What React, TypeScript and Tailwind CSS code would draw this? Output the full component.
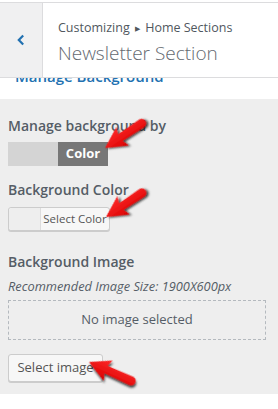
import React from "react";

const font = { fontFamily: '"Open Sans", "Noto Sans", Arial, sans-serif' };

function Arrow({ x, y, angle, len }: { x: number; y: number; angle: number; len: number }) {
  const d = `M0 0 L21 -11 L18.5 -4 L${len} -4.6 A4.6 4.6 0 0 1 ${len} 4.6 L18.5 4 L21 11 Z`;
  return (
    <path
      d={d}
      transform={`translate(${x} ${y}) rotate(${angle})`}
      fill="url(#red)"
      filter="url(#shadow)"
    />
  );
}

export default function App() {
  return (
    <div className="relative w-[278px] h-[409px] bg-white overflow-hidden" style={font}>
      {/* header */}
      <div className="relative z-10 mt-[2px] flex h-[76px] border-y border-[#dcdcde] bg-white">
        <div className="flex w-[43px] items-center justify-center border-r border-[#dcdcde] bg-[#f0f0f1]">
          <svg width="10" height="14" viewBox="0 0 10 14">
            <path d="M7.2 2.5 L2.8 7 L7.2 11.5" fill="none" stroke="#2271b1" strokeWidth="2.2" />
          </svg>
        </div>
        <div className="flex flex-col pl-[15px] pt-[16px]">
          <div className="text-[12.5px] leading-[18px] text-[#50575e]">
            Customizing <span className="text-[7px] align-[1px] px-[2px]">▶</span> Home Sections
          </div>
          <div className="mt-[3px] text-[19px] leading-[24px] font-light text-[#646970]">
            Newsletter Section
          </div>
        </div>
      </div>

      {/* clipped section link */}
      <div className="relative h-[21px] overflow-hidden">
        <div className="-mt-[12px] pl-[15px] text-[15px] leading-[20px] font-semibold text-[#2271b1]">
          Manage Background
        </div>
      </div>

      {/* panel */}
      <div className="bg-[#eeeeee] px-[8px] pt-[17px] pb-[12px] text-[#555d66]">
        <div className="text-[14px] leading-[20px] font-semibold">Manage background by</div>
        <div className="mt-[6px] flex h-[24px] w-[100px] text-[13px] font-bold">
          <div className="w-[50px] bg-[#d4d4d4]" />
          <div className="flex w-[50px] items-center justify-center bg-[#777777] text-white">
            Color
          </div>
        </div>

        <div className="mt-[14px] text-[14px] leading-[20px] font-semibold">Background Color</div>
        <div className="mt-[7px] flex h-[24px] w-[102px] rounded-[3px] border border-[#cccccc] bg-[#f7f7f7] shadow-[0_1px_0_#cccccc]">
          <div className="w-[31px] rounded-l-[3px] bg-[#eeeeee]" />
          <div className="flex flex-1 items-center justify-center border-l border-[#dddddd] text-[11.5px] text-[#555555]">
            Select Color
          </div>
        </div>

        <div className="mt-[21px] text-[14px] leading-[20px] font-semibold">Background Image</div>
        <div className="mt-[5px] text-[12.8px] leading-[18px] italic">
          Recommended Image Size: 1900X600px
        </div>
        <div className="mt-[5px] flex h-[40px] w-[258px] items-center justify-center border border-dashed border-[#b4b9be] text-[13px] text-[#555d66]">
          No image selected
        </div>
        <div className="mt-[14px] flex h-[28px] w-[95px] items-center justify-center rounded-[3px] border border-[#cccccc] bg-[#f7f7f7] text-[13px] text-[#555555] shadow-[0_1px_0_#cccccc]">
          Select image
        </div>
      </div>

      {/* annotation arrows */}
      <svg className="pointer-events-none absolute left-0 top-0 z-20" width="278" height="409">
        <defs>
          <linearGradient id="red" x1="0" y1="0" x2="0" y2="1">
            <stop offset="0" stopColor="#ff2a2a" />
            <stop offset="1" stopColor="#d90000" />
          </linearGradient>
          <filter id="shadow" x="-30%" y="-30%" width="160%" height="160%">
            <feDropShadow dx="1.5" dy="2" stdDeviation="1.3" floodColor="#000" floodOpacity="0.75" />
          </filter>
        </defs>
        <Arrow x={105} y={148} angle={-34} len={44} />
        <Arrow x={106} y={217} angle={-34} len={43} />
        <Arrow x={89} y={362} angle={24} len={46} />
      </svg>
    </div>
  );
}
